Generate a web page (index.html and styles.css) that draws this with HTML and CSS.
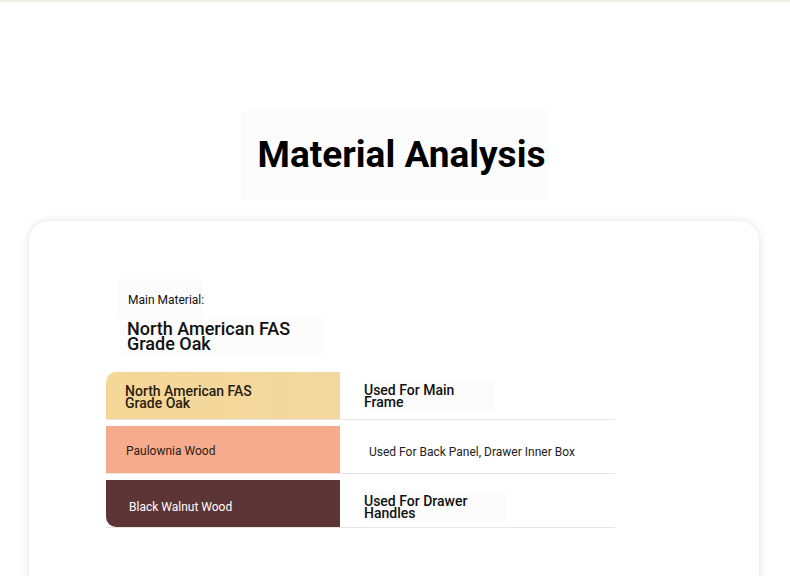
FILE: index.html
```html
<!DOCTYPE html>
<html lang="en">
<head>
    <meta charset="UTF-8">
    <meta name="viewport" content="width=device-width, initial-scale=1.0">
    <title>Material Analysis</title>
    <link rel="stylesheet" href="styles.css">
</head>
<body>
    <div class="top-line"></div>
    <header class="page-head">
        <h1 class="title">Material Analysis</h1>
    </header>
    <main class="card">
        <section class="main-material">
            <div class="label">Main Material:</div>
            <div class="value">North American FAS<br>Grade Oak</div>
        </section>
        <div class="materials">
            <div class="row">
                <div class="name oak"><span>North American FAS<br>Grade Oak</span></div>
                <div class="use"><span class="big">Used For Main<br>Frame</span></div>
            </div>
            <div class="row">
                <div class="name paulownia"><span class="small">Paulownia Wood</span></div>
                <div class="use"><span class="small wide">Used For Back Panel, Drawer Inner Box</span></div>
            </div>
            <div class="row last">
                <div class="name walnut"><span class="small">Black Walnut Wood</span></div>
                <div class="use"><span class="big">Used For Drawer<br>Handles</span></div>
            </div>
        </div>
    </main>
</body>
</html>
```

FILE: styles.css
```css
/* base */
body {
    margin: 0;
    background: #fff;
    font-family: Roboto, "Liberation Sans", Arial, sans-serif;
    color: #111;
}

.top-line {
    height: 2px;
    background: #f1efe4;
}

.page-head {
    display: flex;
    justify-content: center;
    padding-top: 108px;
}

.title {
    margin: 0;
    padding: 23px 4px 23px 17px;
    font-size: 37px;
    font-weight: 700;
    line-height: 44px;
    background: #fcfcfc;
    color: #000;
}

.card {
    margin: 21px 31px 0 29px;
    background: #fff;
    border-radius: 20px;
    box-shadow: 0 0 10px rgba(0, 0, 0, 0.12);
    padding: 58px 144px 60px 77px;
    min-height: 300px;
}

.main-material {
    padding-left: 11px;
}

.main-material .label {
    display: inline-block;
    padding: 14px 0 10px 11px;
    width: 75px;
    white-space: nowrap;
    font-size: 12px;
    line-height: 14px;
    background: #fcfcfc;
}

.main-material .value {
    width: 195px;
    margin: 0 0 17px 3px;
    padding: 4px 0 4px 7px;
    font-size: 18px;
    font-weight: 500;
    line-height: 15px;
    background: #fcfcfc;
}

.row {
    display: flex;
    border-bottom: 1px solid #e6e6e6;
    margin-top: 6px;
}

.row:first-child {
    margin-top: 0;
}

.name {
    width: 234px;
    height: 47px;
    display: flex;
    align-items: center;
    padding-left: 19px;
    box-sizing: border-box;
    font-size: 14px;
    font-weight: 500;
    line-height: 12px;
    color: #2a1d12;
}

.name.oak {
    background: linear-gradient(90deg, #f5d797, #f3d9a0);
    border-top-left-radius: 10px;
    padding-top: 2px;
}

.name.paulownia {
    background: #f6ab8c;
    padding: 3px 0 0 20px;
}

.name.walnut {
    background: #5e3537;
    color: #fff;
    padding: 7px 0 0 23px;
    border-bottom-left-radius: 10px;
}

.small {
    font-size: 12px;
    font-weight: 400;
    line-height: 14px;
}

.use {
    flex: 1;
    display: flex;
    align-items: center;
    padding-left: 24px;
}

.row:first-child .use {
    padding-top: 2px;
}

.row.last .use {
    padding-top: 7px;
}

.use .big {
    font-size: 14px;
    font-weight: 500;
    line-height: 12px;
    padding: 3px 40px 4px 0;
    background: #fcfcfc;
}

.use .wide {
    margin: 4px 0 0 5px;
    color: #222;
}
```
